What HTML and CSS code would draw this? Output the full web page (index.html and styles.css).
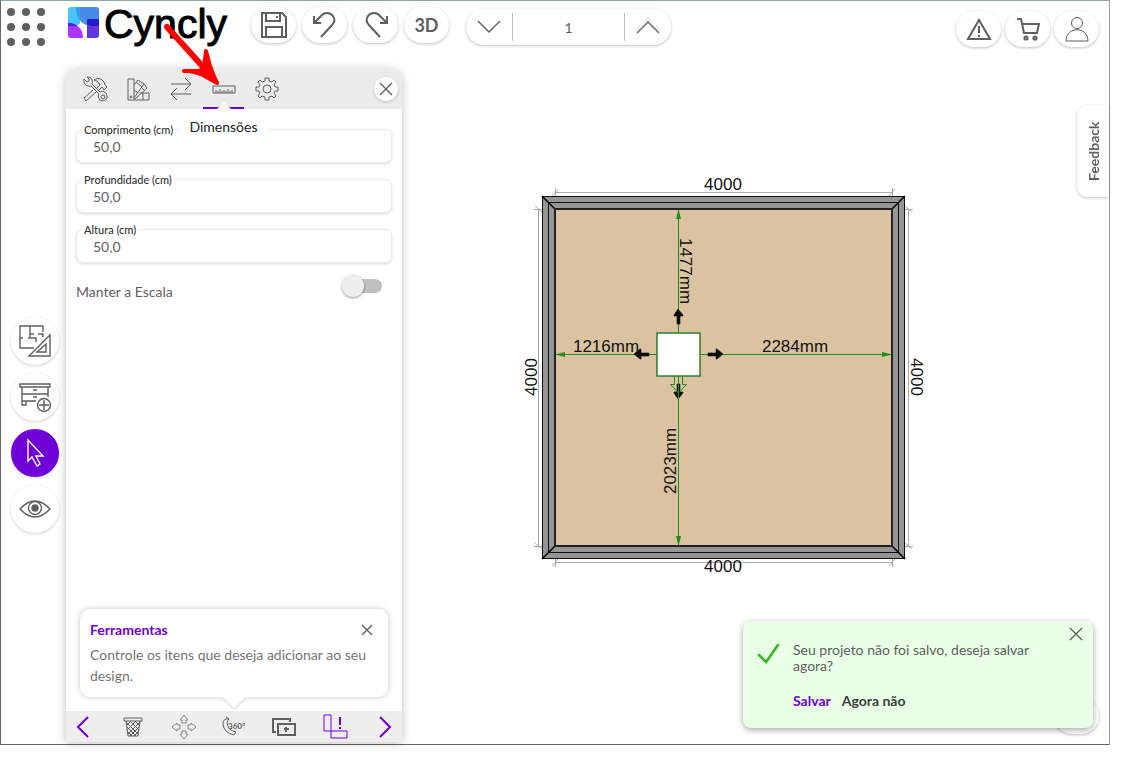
FILE: index.html
```
<!DOCTYPE html>
<html lang="pt">
<head>
    <meta charset="UTF-8">
    <meta name="viewport" content="width=device-width, initial-scale=1.0">
    <title>Cyncly</title>
    <link rel="stylesheet" href="styles.css">
</head>
<body>
<div class="app">
    <header class="topbar">
        <button class="apps" aria-label="Menu">
            <svg width="40" height="40" viewBox="0 0 40 40" fill="#5f5f5f">
                <circle cx="5" cy="5" r="4"/><circle cx="20" cy="5" r="4"/><circle cx="35" cy="5" r="4"/>
                <circle cx="5" cy="20" r="4"/><circle cx="20" cy="20" r="4"/><circle cx="35" cy="20" r="4"/>
                <circle cx="5" cy="35" r="4"/><circle cx="20" cy="35" r="4"/><circle cx="35" cy="35" r="4"/>
            </svg>
        </button>
        <a class="logo" href="#">
            <svg width="31" height="31" viewBox="0 0 31 31">
                <path d="M3 0H12V16C10 20 4 18 0 18V3Q0 0 3 0Z" fill="#48c5ff"/>
                <path d="M8 0H28Q31 0 31 3V19H24C14 19 8 11 8 0Z" fill="#468de8"/>
                <path d="M8 0H12V13C9 10 8 5 8 0Z" fill="#329fee"/>
                <path d="M0 16C9 16 15 22 15 31H3Q0 31 0 28Z" fill="#ab35ff"/>
                <path d="M0 16C4 16 7 17 9 19H0Z" fill="#3427e5"/>
                <path d="M19 14Q19 12 21 12H31V28Q31 31 28 31H19Z" fill="#6436e2"/>
                <path d="M20 12H31V19H24Q21 19 19 17V13Z" fill="#261bcb"/>
            </svg>
            <span>Cyncly</span>
        </a>
        <div class="tools">
            <button class="pill" aria-label="Salvar projeto">
                <svg width="26" height="26" viewBox="0 0 26 26" class="line thick">
                    <path d="M1 1H21L25 5V25H1Z M5 1V9H19V1 M5 25V15H21V25"/><path d="M15 5H17"/>
                </svg>
            </button>
            <button class="pill" aria-label="Desfazer">
                <svg width="26" height="26" viewBox="0 0 26 26" class="line thick">
                    <path d="M2 4V11H9 M2 11L9 4C12 0 18 0 21 4C23 7 23 10 20 13L9 25"/>
                </svg>
            </button>
            <button class="pill" aria-label="Refazer">
                <svg width="26" height="26" viewBox="0 0 26 26" class="line thick">
                    <path d="M24 4V11H17 M24 11L17 4C14 0 8 0 5 4C3 7 3 10 6 13L17 25"/>
                </svg>
            </button>
            <button class="pill">3D</button>
        </div>
        <div class="stepper">
            <button aria-label="Diminuir">
                <svg width="24" height="14" viewBox="0 0 24 14" class="line"><path d="M1 1L12 12L23 1"/></svg>
            </button>
            <input type="text" value="1" aria-label="Andar">
            <button aria-label="Aumentar">
                <svg width="24" height="14" viewBox="0 0 24 14" class="line"><path d="M1 13L12 2L23 13"/></svg>
            </button>
        </div>
        <div class="account">
            <button class="pill" aria-label="Avisos">
                <svg width="26" height="24" viewBox="0 0 26 24" class="line thick">
                    <path d="M13 3L24 22H2Z"/><path d="M13 9V16 M13 18V20"/>
                </svg>
            </button>
            <button class="pill" aria-label="Carrinho">
                <svg width="24" height="24" viewBox="0 0 24 24" class="line thick">
                    <path d="M1 2H5L8 16H21L23 7H6"/><circle cx="10" cy="21" r="1.6"/><circle cx="19" cy="21" r="1.6"/>
                </svg>
            </button>
            <button class="pill" aria-label="Conta">
                <svg width="24" height="26" viewBox="0 0 24 26" class="line thin">
                    <circle cx="12" cy="7" r="5.5"/><path d="M1 25C1 10 23 10 23 25Z"/>
                </svg>
            </button>
        </div>
    </header>

    <main class="workspace">
        <nav class="side">
            <button aria-label="Planta">
                <svg width="34" height="34" viewBox="0 0 34 34" class="line">
                    <path d="M16 24H2V2H25V8 M12 2V13 M2 14H5 M10 14H18V18 M12 10H16 M20 10H25V13"/>
                    <path d="M32 11V32H11Z M28 20V28H19Z"/>
                </svg>
            </button>
            <button aria-label="Catálogo">
                <svg width="34" height="34" viewBox="0 0 34 34" class="line">
                    <path d="M2 4H32V7H2Z M4 7V25H8V21 M30 7V17 M4 14H30 M4 21H18 M15 10H19 M15 17H19"/>
                    <circle cx="26" cy="25" r="6.5"/><path d="M26 20V30 M21 25H31"/>
                </svg>
            </button>
            <button class="selected" aria-label="Selecionar">
                <svg width="34" height="34" viewBox="0 0 34 34" class="line">
                    <path d="M10 4V25L14 21L19 30L22 28L18 20H25Z"/>
                </svg>
            </button>
            <button aria-label="Visualizar">
                <svg width="34" height="34" viewBox="0 0 34 34" class="line">
                    <path d="M2 17Q17 1 32 17Q17 33 2 17Z"/><circle cx="17" cy="16" r="6.5"/>
                    <circle cx="17" cy="16" r="3" fill="#5f5f5f"/>
                </svg>
            </button>
        </nav>

        <section class="panel">
            <div class="tabs">
                <button class="tab" aria-label="Ferramentas">
                    <svg width="26" height="26" viewBox="0 0 26 26" class="line thin">
                        <path d="M2 3L5 6L7 5L7 3L5 1C10 1 11 4 10 8L18 16C22 14 25 17 25 21C25 24 21 26 18 24C16 22 16 20 17 18L9 10C5 11 1 8 2 3Z"/>
                        <circle cx="21" cy="21" r="2"/>
                        <path d="M11 14L2 22L4 25L14 16 M15 12L18 9L15 5L12 4Q15 1 19 3L22 6L23 9L25 11L22 14L20 11L17 14"/>
                    </svg>
                </button>
                <button class="tab" aria-label="Materiais">
                    <svg width="24" height="24" viewBox="0 0 24 24" class="line thin">
                        <path d="M2 2H8V23H2Z M8 8L12 3L18 7L8 21 M10 5L16 10 M18 7L21 11L9 22 M15 10L19 14 M8 13L12 16 M14 16H23V23H8 M17 16V23"/>
                        <circle cx="5" cy="20" r="1"/>
                    </svg>
                </button>
                <button class="tab" aria-label="Substituir">
                    <svg width="24" height="24" viewBox="0 0 24 24" class="line thin">
                        <path d="M2 7H22L16 1 M22 7L16 13 M22 17H2L8 11 M2 17L8 23"/>
                    </svg>
                </button>
                <button class="tab active" aria-label="Dimensões" aria-describedby="tip">
                    <svg width="24" height="24" viewBox="0 0 24 24" class="line thin">
                        <path d="M1 9H23V16H1Z M4 16V13 M6 16V14 M8 16V12 M10 16V14 M12 16V13 M14 16V14 M16 16V12 M18 16V14 M20 16V13"/>
                    </svg>
                    <span class="tooltip" id="tip" role="tooltip">Dimensões</span>
                </button>
                <button class="tab" aria-label="Configurações">
                    <svg width="24" height="24" viewBox="0 0 24 24" class="line thin">
                        <path d="M10 4V1H14V4L17 5L19 3L21 5L19 8L20 10H23V14H20L19 16L21 19L19 21L17 19L14 20V23H10V20L7 19L5 21L3 19L5 16L4 14H1V10H4L5 8L3 5L5 3L7 5Z"/>
                        <circle cx="12" cy="12" r="4"/>
                    </svg>
                </button>
                <button class="close" aria-label="Fechar painel">
                    <svg width="14" height="14" viewBox="0 0 14 14" class="line"><path d="M1 1L13 13M13 1L1 13"/></svg>
                </button>
            </div>

            <form class="fields">
                <div class="field">
                    <label for="comprimento">Comprimento (cm)</label>
                    <input type="text" id="comprimento" value="50,0">
                </div>
                <div class="field">
                    <label for="profundidade">Profundidade (cm)</label>
                    <input type="text" id="profundidade" value="50,0">
                </div>
                <div class="field">
                    <label for="altura">Altura (cm)</label>
                    <input type="text" id="altura" value="50,0">
                </div>
                <div class="scale">
                    <label for="escala">Manter a Escala</label>
                    <input type="checkbox" id="escala">
                </div>
            </form>

            <div class="callout">
                <div class="callout-head">
                    <h2>Ferramentas</h2>
                    <button aria-label="Fechar dica">
                        <svg width="12" height="12" viewBox="0 0 12 12" class="line"><path d="M1 1L11 11M11 1L1 11"/></svg>
                    </button>
                </div>
                <p>Controle os itens que deseja adicionar ao seu design.</p>
            </div>

            <div class="actions">
                <button class="purple" aria-label="Anterior">
                    <svg width="26" height="26" viewBox="0 0 26 26" class="line thick"><path d="M18 3L8 13L18 23"/></svg>
                </button>
                <button aria-label="Excluir">
                    <svg width="26" height="26" viewBox="0 0 26 26" class="line thin">
                        <path d="M4 4H22V7H4Z M6 7L8 22H18L20 7"/>
                        <path d="M10 7L19 16M15 7L20 12M6 8L18 20M7 13L16 22M8 18L12 22M16 7L7 16M11 7L6 12M20 8L8 20M19 13L10 22M18 18L14 22"/>
                    </svg>
                </button>
                <button class="faded" aria-label="Mover">
                    <svg width="26" height="26" viewBox="0 0 26 26" class="line thin">
                        <path d="M13 1L17 6H15V9H11V6H9Z M13 25L9 20H11V17H15V20H17Z M1 13L6 9V11H9V15H6V17Z M25 13L20 17V15H17V11H20V9Z"/>
                    </svg>
                </button>
                <button aria-label="Girar">
                    <svg width="26" height="26" viewBox="0 0 26 26" class="line thin">
                        <path d="M8 5Q2 4 2 10Q3 19 13 21L15 18Q6 16 6 8L8 5 M8 5L5 3"/>
                        <text x="7" y="15">360°</text>
                    </svg>
                </button>
                <button aria-label="Duplicar">
                    <svg width="26" height="26" viewBox="0 0 26 26" class="line thick">
                        <path d="M5 18H2V5H19V8 M7 10H24V21H7Z"/><path d="M13 15H18M15 13V18"/>
                    </svg>
                </button>
                <button class="purple" aria-label="Colisão">
                    <svg width="26" height="26" viewBox="0 0 26 26" class="line thin">
                        <path d="M2 1H9V17H2Z M9 17H25V24H9Z"/><path class="bang" d="M18 3V11M18 13V15"/>
                    </svg>
                </button>
                <button class="purple" aria-label="Próximo">
                    <svg width="26" height="26" viewBox="0 0 26 26" class="line thick"><path d="M8 3L18 13L8 23"/></svg>
                </button>
            </div>
        </section>

        <section class="stage">
            <svg class="plan" width="410" height="410" viewBox="0 0 410 410">
                <!-- walls and floor -->
                <rect class="wall" x="24.5" y="24.5" width="362" height="362"/>
                <rect class="wall" x="30.5" y="30.5" width="350" height="350"/>
                <path class="edge" d="M24 24L37 37M387 24L374 37M24 387L37 374M387 387L374 374"/>
                <rect class="floor" x="37" y="37" width="337" height="337"/>

                <!-- wall dimensions -->
                <path class="dim" d="M37 20.5H374M37 390.5H374M20.5 37V374M390.5 37V374"/>
                <path class="dim" d="M37.5 16V24M374.5 16V24M37.5 387V395M374.5 387V395M16 37.5H24M16 374.5H24M387 37.5H395M387 374.5H395"/>
                <path class="dim" d="M34 24L40 17M371 24L377 17M34 394L40 387M371 394L377 387M17 34L24 40M17 371L24 377M387 34L394 40M387 371L394 377"/>
                <text x="205" y="18">4000</text>
                <text x="205" y="400">4000</text>
                <text transform="translate(19 205) rotate(-90)">4000</text>
                <text transform="translate(393 205) rotate(90)">4000</text>

                <!-- distances from the item to each wall -->
                <path class="guide" d="M160.5 38V373M38 182.5H373"/>
                <path class="tip" d="M160.5 37L163 47H158ZM160.5 374L163 364H158ZM37 182.5L47 180V185ZM374 182.5L364 180V185Z"/>
                <rect class="item" x="139" y="161" width="43" height="43"/>
                <g class="handles">
                    <path d="M160 137L165 143V144H162V152H159V144H156V143Z"/>
                    <path d="M160 227L165 221V220H162V212H159V220H156V221Z"/>
                    <path d="M116 182L122 177H123V181H131V184H123V187H122Z"/>
                    <path d="M205 182L199 177H198V181H190V184H198V187H199Z"/>
                </g>
                <path class="guide" d="M156.5 204V212.5H152.5L160.5 221L168.5 212.5H164.5V204M160.5 204V230"/>
                <text x="88" y="180">1216mm</text>
                <text x="277" y="180">2284mm</text>
                <text transform="translate(162 99) rotate(90)">1477mm</text>
                <text transform="translate(158 289) rotate(-90)">2023mm</text>
            </svg>
        </section>

        <button class="feedback">Feedback</button>
    </main>

    <button class="pill help" aria-label="Ajuda"></button>

    <div class="toast" role="alert">
        <svg class="check" width="24" height="24" viewBox="0 0 24 24"><path d="M2 13L9 20L21 3"/></svg>
        <div class="toast-body">
            <p>Seu projeto não foi salvo, deseja salvar agora?</p>
            <div class="toast-actions">
                <button class="save">Salvar</button>
                <button>Agora não</button>
            </div>
        </div>
        <button class="toast-close" aria-label="Fechar aviso">
            <svg width="14" height="14" viewBox="0 0 14 14" class="line"><path d="M1 1L13 13M13 1L1 13"/></svg>
        </button>
    </div>

    <!-- arrow pointing at the dimensions tab -->
    <svg class="pointer" width="70" height="70" viewBox="0 0 70 70">
        <path class="shaft" d="M8 9L46 51"/>
        <path class="head" d="M25 53Q36 53 44 57L58 65Q54 57 51 48L47 33L45 50L40 53Z"/>
    </svg>
</div>
</body>
</html>
```
FILE: styles.css
```
* {
    box-sizing: border-box;
}

body {
    margin: 0;
    font-family: Lato, sans-serif;
    font-size: 14px;
    color: #5f5f5f;
    background-color: #fff;
}

button {
    display: flex;
    align-items: center;
    justify-content: center;
    padding: 0;
    border: none;
    background: none;
    color: #5f5f5f;
    font-family: inherit;
    font-size: 14px;
    cursor: pointer;
}

.app {
    position: relative;
    display: flex;
    flex-direction: column;
    min-height: calc(100vh - 14px);
    margin: 0 14px 14px 0;
    border: 1px solid #93a1a8;
    border-left-color: #666;
    border-bottom-color: #666;
}

/* icons */
.line {
    fill: none;
    stroke: currentColor;
    stroke-width: 1.4;
}

.thin {
    stroke-width: 1;
}

.thick {
    stroke-width: 2;
}

/* top bar */
.topbar {
    display: flex;
    align-items: flex-start;
    height: 68px;
    padding: 6px 10px 0 5px;
}

.logo {
    display: flex;
    width: 183px;
    margin-left: 22px;
    color: #000;
    text-decoration: none;
}

.logo span {
    margin-left: 5px;
    font-family: "Liberation Sans", Arial, sans-serif;
    font-size: 41px;
    line-height: 34px;
    -webkit-text-stroke: 1px #000;
}

.tools {
    display: flex;
    gap: 6px;
}

.pill {
    width: 45px;
    height: 36px;
    border-radius: 18px;
    background-color: #fff;
    box-shadow: 0 1px 3px rgba(0, 0, 0, 0.25);
    font-size: 18px;
    font-weight: bold;
}

.stepper {
    display: flex;
    align-items: center;
    width: 205px;
    height: 36px;
    margin: 2px 0 0 17px;
    border-radius: 18px;
    box-shadow: 0 1px 3px rgba(0, 0, 0, 0.25);
}

.stepper button {
    width: 46px;
    height: 28px;
}

.stepper input {
    flex: 1;
    min-width: 0;
    height: 28px;
    padding: 0;
    border: solid #bbb;
    border-width: 0 1px;
    color: #5f5f5f;
    font-family: inherit;
    font-size: 14px;
    text-align: center;
}

.account {
    display: flex;
    gap: 4px;
    margin: 4px 0 0 auto;
}

/* workspace */
.workspace {
    display: flex;
    flex: 1;
    padding-bottom: 2px;
}

.side {
    display: flex;
    flex-direction: column;
    justify-content: center;
    align-items: center;
    gap: 8px;
    width: 65px;
    padding: 38px 0 0 3px;
}

.side button {
    width: 48px;
    height: 48px;
    border-radius: 50%;
    background-color: #fff;
    box-shadow: 0 1px 3px rgba(0, 0, 0, 0.18);
}

.side .selected {
    background-color: #6f00d8;
    color: #fff;
}

.panel {
    display: flex;
    flex-direction: column;
    width: 336px;
    border-radius: 12px 12px 0 0;
    background-color: #fff;
    box-shadow: 0 1px 10px rgba(0, 0, 0, 0.25);
}

.tabs {
    display: flex;
    height: 40px;
    padding: 0 4px 0 7px;
    border-radius: 12px 12px 0 0;
    background-color: #ebebeb;
}

.tab {
    position: relative;
    width: 43px;
}

.active {
    width: 41px;
    margin: 0 1px;
    padding-top: 2px;
    border: solid #6f00d8;
    border-width: 0 0 2px;
}

.active::after {
    content: "";
    position: absolute;
    bottom: -2px;
    border: 7px solid transparent;
    border-top: none;
    border-bottom-color: #fff;
}

.tooltip {
    position: absolute;
    top: 43px;
    left: 50%;
    z-index: 1;
    transform: translateX(-50%);
    padding: 6px 10px;
    border-radius: 4px;
    background-color: #fff;
    color: #222;
    line-height: 17px;
}

.close {
    align-self: center;
    width: 24px;
    height: 24px;
    margin-left: auto;
    border-radius: 50%;
    background-color: #fff;
    box-shadow: 0 1px 3px rgba(0, 0, 0, 0.2);
}

.fields {
    flex: 1;
    padding: 20px 10px;
}

.field {
    position: relative;
    margin-bottom: 16px;
}

.field label {
    position: absolute;
    top: -7px;
    left: 6px;
    padding: 0 2px;
    background-color: #fff;
    color: #333;
    font-size: 11px;
    font-weight: 500;
    line-height: 16px;
}

.field input {
    display: block;
    width: 100%;
    height: 34px;
    padding: 0 16px;
    border: 1px solid #ececec;
    border-radius: 7px;
    box-shadow: 0 1px 3px rgba(0, 0, 0, 0.15);
    color: #5f5f5f;
    font-family: inherit;
    font-size: 14px;
}

.scale {
    display: flex;
    justify-content: space-between;
    padding-right: 10px;
}

.scale label {
    padding-top: 4px;
    line-height: 18px;
}

.scale input {
    appearance: none;
    display: flex;
    align-items: center;
    width: 32px;
    height: 14px;
    margin: 0;
    border-radius: 7px;
    background-color: #bfbfbf;
}

.scale input::before {
    content: "";
    flex: none;
    width: 22px;
    height: 22px;
    margin-left: -8px;
    border-radius: 50%;
    background-color: #eee;
    box-shadow: 0 1px 3px rgba(0, 0, 0, 0.4);
}

.scale input:checked {
    justify-content: flex-end;
    background-color: #6f00d8;
}

.callout {
    position: relative;
    margin: 0 14px 14px;
    padding: 10px 10px 11px;
    border-radius: 10px;
    background-color: #fff;
    box-shadow: 0 0 6px rgba(0, 0, 0, 0.22);
}

.callout::after {
    content: "";
    position: absolute;
    top: 100%;
    left: 50%;
    margin-left: -11px;
    border: 11px solid transparent;
    border-top-color: #fff;
    border-bottom: none;
    filter: drop-shadow(0 2px 1px rgba(0, 0, 0, 0.12));
}

.callout-head {
    display: flex;
    justify-content: space-between;
    padding-right: 5px;
}

.callout h2 {
    margin: 0;
    color: #6f00d8;
    font-size: 14px;
    line-height: 22px;
}

.callout p {
    margin: 3px 0 0;
    color: #757575;
    line-height: 21px;
}

.actions {
    display: flex;
    justify-content: space-between;
    height: 31px;
    padding: 0 4px;
    background-color: #eee;
}

.actions text {
    fill: currentColor;
    stroke: none;
    font-size: 8px;
    font-weight: bold;
}

.purple {
    color: #6f00d8;
}

.faded {
    color: #888;
}

.bang {
    stroke-width: 2;
}

/* floor plan */
.stage {
    display: flex;
    flex: 1;
    justify-content: center;
    align-items: center;
    min-width: 0;
    padding: 0 33px 57px 0;
}

.plan {
    max-width: 100%;
}

.plan text {
    font-family: "Liberation Sans", Arial, sans-serif;
    font-size: 17px;
    fill: #111;
    text-anchor: middle;
}

.wall {
    fill: #959595;
    stroke: #111;
}

.edge {
    stroke: #000;
    stroke-width: 1.5;
}

.floor {
    fill: #dbc3a1;
    stroke: #222;
    stroke-width: 2;
}

.dim {
    fill: none;
    stroke: #aaa;
}

.guide {
    fill: none;
    stroke: #1e8c1e;
}

.tip {
    fill: #1e8c1e;
}

.item {
    fill: #fff;
    stroke: #2d7b2d;
    stroke-width: 1.5;
}

.handles {
    fill: #0a0a0a;
    stroke: #0a0a0a;
    stroke-width: 0.6;
}

.feedback {
    width: 32px;
    height: 92px;
    margin-top: 36px;
    border-radius: 0 10px 10px 0;
    box-shadow: 0 -1px 3px rgba(0, 0, 0, 0.25);
    font-weight: bold;
    writing-mode: vertical-rl;
    transform: rotate(180deg);
}

/* save message */
.help {
    position: absolute;
    right: 10px;
    bottom: 10px;
}

.toast {
    position: absolute;
    right: 16px;
    bottom: 16px;
    display: flex;
    width: 350px;
    padding: 21px 10px 18px 14px;
    border-radius: 8px;
    background-color: #e9ffe6;
    box-shadow: 0 2px 6px rgba(0, 0, 0, 0.35);
}

.check {
    flex: none;
    fill: none;
    stroke: #36b51c;
    stroke-width: 2.5;
    stroke-linecap: round;
}

.toast-body {
    flex: 1;
    margin-left: 12px;
}

.toast p {
    margin: 0;
    line-height: 16px;
}

.toast-actions {
    display: flex;
    gap: 11px;
    margin-top: 18px;
}

.toast-actions button {
    color: #3c3c3c;
    font-weight: bold;
    line-height: 18px;
}

.toast-actions .save {
    color: #6f00d8;
}

.toast-close {
    align-self: flex-start;
    margin-top: -15px;
}

.pointer {
    position: absolute;
    top: 17px;
    left: 158px;
    fill: none;
    stroke: #f00;
    stroke-linecap: round;
    stroke-linejoin: round;
    pointer-events: none;
}

.shaft {
    stroke-width: 6;
}

.head {
    fill: #f00;
    stroke-width: 4;
}
```
